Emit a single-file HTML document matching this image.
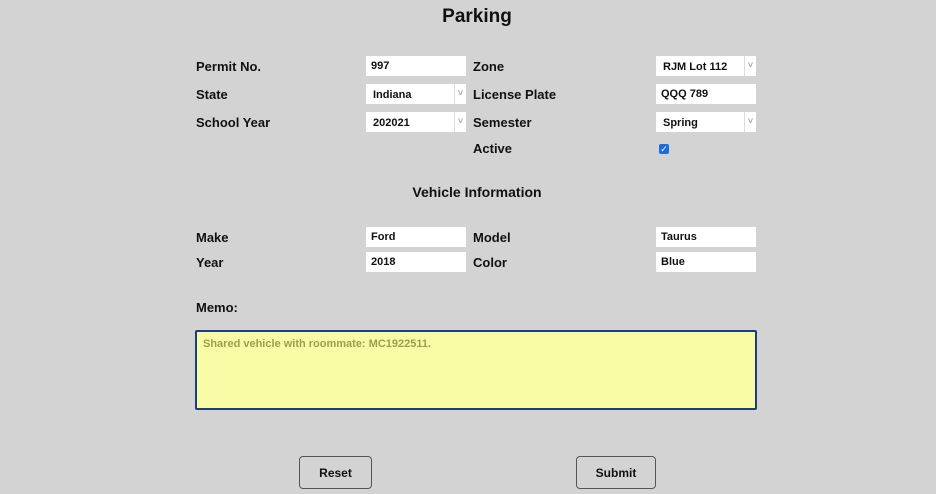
<!DOCTYPE html>
<html><head><style>
body{margin:0;width:936px;height:494px;background:#d3d3d3;font-family:"Liberation Sans",sans-serif;position:relative;overflow:hidden;color:#111}
.a{position:absolute}
.l{position:absolute;font-weight:bold;font-size:13px;line-height:16px}
.i{position:absolute;background:#fff;width:100px;height:20px;font-size:11px;font-weight:bold;line-height:20px;box-sizing:border-box;padding-left:5px}
.s::after{content:"˅";position:absolute;right:0;top:0;width:11px;height:20px;border-left:1px solid #ddd;color:#aaa;font-size:9px;text-align:center;line-height:18px}
.s{padding-left:7px;line-height:22px}
.b{position:absolute;border:1px solid #555;border-radius:4px;font-size:12px;font-weight:bold;text-align:center;line-height:33px;height:31px}
</style></head><body>
<div class="a" style="left:0;width:954px;top:6px;text-align:center;font-size:19px;font-weight:bold">Parking</div>
<div class="l" style="left:196px;top:59px">Permit No.</div>
<div class="l" style="left:196px;top:87px">State</div>
<div class="l" style="left:196px;top:115px">School Year</div>
<div class="l" style="left:473px;top:59px">Zone</div>
<div class="l" style="left:473px;top:87px">License Plate</div>
<div class="l" style="left:473px;top:115px">Semester</div>
<div class="l" style="left:473px;top:141px">Active</div>
<div class="i" style="left:366px;top:56px">997</div>
<div class="i s" style="left:366px;top:84px">Indiana</div>
<div class="i s" style="left:366px;top:112px">202021</div>
<div class="i s" style="left:656px;top:56px">RJM Lot 112</div>
<div class="i" style="left:656px;top:84px">QQQ 789</div>
<div class="i s" style="left:656px;top:112px">Spring</div>
<div class="a" style="left:659px;top:144px;width:10px;height:10px;background:#1a6fe0;border-radius:2px;color:#fff;font-size:9px;line-height:10px;text-align:center">✓</div>
<div class="a" style="left:0;width:954px;top:184px;text-align:center;font-size:14px;font-weight:bold">Vehicle Information</div>
<div class="l" style="left:196px;top:230px">Make</div>
<div class="l" style="left:196px;top:255px">Year</div>
<div class="l" style="left:473px;top:230px">Model</div>
<div class="l" style="left:473px;top:255px">Color</div>
<div class="i" style="left:366px;top:227px">Ford</div>
<div class="i" style="left:366px;top:252px">2018</div>
<div class="i" style="left:656px;top:227px">Taurus</div>
<div class="i" style="left:656px;top:252px">Blue</div>
<div class="l" style="left:196px;top:300px">Memo:</div>
<div class="a" style="left:195px;top:330px;width:552px;height:76px;background:#f8fba6;border:2px solid #1c3f7a;border-radius:2px;font-size:11px;font-weight:bold;color:#9e9e50;padding:0 0 0 6px;line-height:24px">Shared vehicle with roommate: MC1922511.</div>
<div class="b" style="left:299px;top:456px;width:71px">Reset</div>
<div class="b" style="left:576px;top:456px;width:78px">Submit</div>
</body></html>
